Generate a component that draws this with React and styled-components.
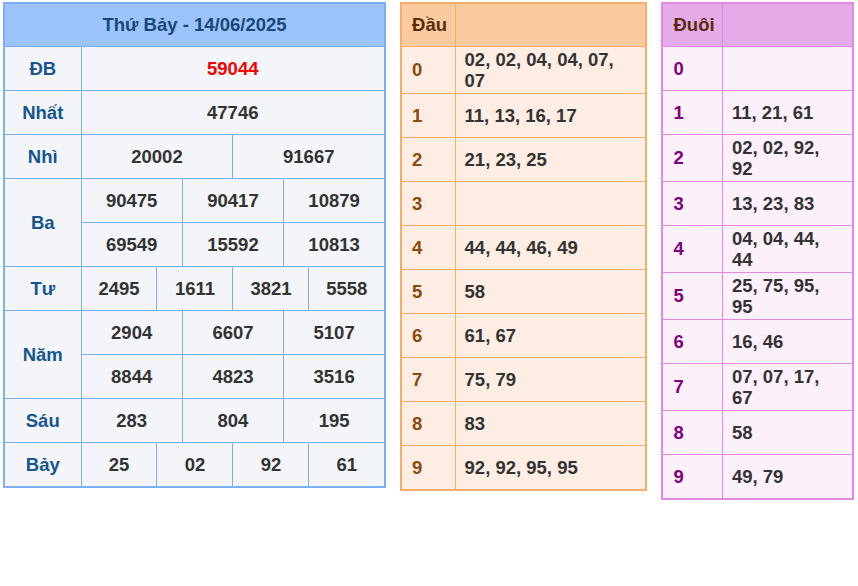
import React from "react";
import styled, { createGlobalStyle } from "styled-components";

const Global = createGlobalStyle`
  body { margin: 0; font-family: "Liberation Sans", Arial, sans-serif; background: #fff; }
`;

const Page = styled.div`
  display: flex;
  align-items: flex-start;
  gap: 14px;
  padding: 2px 4px 0 3px;
`;

const Table = styled.table`
  border-collapse: collapse;
  table-layout: fixed;
  width: ${(p) => p.$w}px;
  border: 2px solid ${(p) => p.$border};
  font-size: 18.5px;
  font-weight: bold;
  td, th { border: 1px solid ${(p) => p.$border}; padding-top: 0; padding-bottom: 0; }
`;

const Title = styled.th`
  background: #9dc3fb;
  color: #16497a;
  height: 42px;
`;

const Label = styled.td`
  background: #f3f5f9;
  color: #16558f;
  text-align: center;
  height: 43px;
`;

const Val = styled.td`
  background: #f3f5f9;
  color: ${(p) => (p.$red ? "#f40000" : "#333")};
  text-align: center;
  height: 43px;
`;

const HeadCell = styled.th`
  background: ${(p) => p.$bg};
  color: #5a2a0a;
  text-align: left;
  padding: 0 10px;
  height: 42px;
`;

const Key = styled.td`
  background: ${(p) => p.$bg};
  color: ${(p) => p.$c};
  padding: 0 10px;
  height: 43px;
`;

const List = styled.td`
  background: ${(p) => p.$bg};
  color: #333;
  && { padding: 2px 20px 2px 9px; }
  line-height: 21px;
  height: 39px;
`;

const rows = [
  ["ĐB", [["59044", 12, true]]],
  ["Nhất", [["47746", 12]]],
  ["Nhì", [["20002", 6], ["91667", 6]]],
  ["Ba", [["90475", 4], ["90417", 4], ["10879", 4]], [["69549", 4], ["15592", 4], ["10813", 4]]],
  ["Tư", [["2495", 3], ["1611", 3], ["3821", 3], ["5558", 3]]],
  ["Năm", [["2904", 4], ["6607", 4], ["5107", 4]], [["8844", 4], ["4823", 4], ["3516", 4]]],
  ["Sáu", [["283", 4], ["804", 4], ["195", 4]]],
  ["Bảy", [["25", 3], ["02", 3], ["92", 3], ["61", 3]]],
];

const dau = ["02, 02, 04, 04, 07, 07", "11, 13, 16, 17", "21, 23, 25", "", "44, 44, 46, 49", "58", "61, 67", "75, 79", "83", "92, 92, 95, 95"];
const duoi = ["", "11, 21, 61", "02, 02, 92, 92", "13, 23, 83", "04, 04, 44, 44", "25, 75, 95, 95", "16, 46", "07, 07, 17, 67", "58", "49, 79"];

const cells = (r) => r.map(([v, s, red], i) => <Val key={i} colSpan={s} $red={red}>{v}</Val>);

function Side({ title, data, w, kw, border, hbg, bbg, kc }) {
  return (
    <Table $w={w} $border={border}>
      <colgroup><col style={{ width: kw }} /><col /></colgroup>
      <thead><tr><HeadCell $bg={hbg}>{title}</HeadCell><HeadCell $bg={hbg} /></tr></thead>
      <tbody>
        {data.map((d, i) => (
          <tr key={i}>
            <Key $bg={bbg} $c={kc}>{i}</Key>
            <List $bg={bbg}>{d}</List>
          </tr>
        ))}
      </tbody>
    </Table>
  );
}

export default function App() {
  return (
    <>
      <Global />
      <Page>
        <Table $w={384} $border="#7eaef2">
          <colgroup>
            <col style={{ width: 77 }} />
            {Array.from({ length: 12 }).map((_, i) => <col key={i} />)}
          </colgroup>
          <thead><tr><Title colSpan={13}>Thứ Bảy - 14/06/2025</Title></tr></thead>
          <tbody>
            {rows.map(([label, a, b]) => (
              <React.Fragment key={label}>
                <tr>
                  <Label rowSpan={b ? 2 : 1}>{label}</Label>
                  {cells(a)}
                </tr>
                {b && <tr>{cells(b)}</tr>}
              </React.Fragment>
            ))}
          </tbody>
        </Table>
        <Side title="Đầu" data={dau} w={248} kw={54} border="#f5ad6b" hbg="#f9cb9e" bbg="#fdede2" kc="#8b4a0e" />
        <Side title="Đuôi" data={duoi} w={193} kw={60} border="#e388e3" hbg="#e4abe8" bbg="#fcf0fb" kc="#800080" />
      </Page>
    </>
  );
}
